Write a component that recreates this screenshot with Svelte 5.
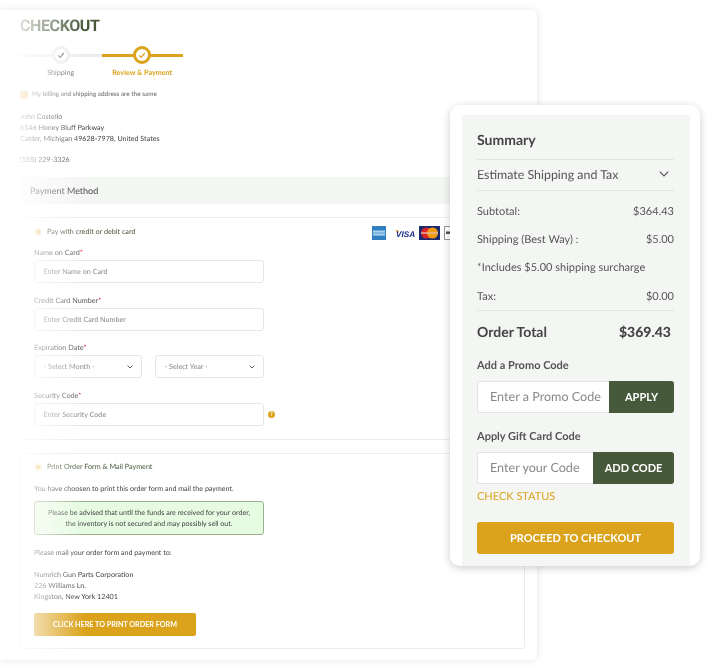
<script>
    const totals = [
        { label: "Subtotal:", value: "$364.43" },
        { label: "Shipping (Best Way) :", value: "$5.00" },
        { label: "*Includes $5.00 shipping surcharge", value: "" },
        { label: "Tax:", value: "$0.00" }
    ];
    const address = ["John Costello", "6146 Honey Bluff Parkway", "Calder, Michigan 49628-7978, United States"];
    const mailTo = ["Numrich Gun Parts Corporation", "226 Williams Ln.", "Kingston, New York 12401"];
</script>

<div class="page">
    <main class="card">
        <h1>CHECKOUT</h1>

        <div class="stepper">
            <div class="step">
                <span class="mark">
                    <svg viewBox="0 0 10 10" width="8" height="8"><path d="M1.5 5.5 4 8 8.5 2.5" fill="none" stroke="#777" stroke-width="1.6"/></svg>
                </span>
                <span class="name">Shipping</span>
            </div>
            <div class="step active">
                <span class="mark">
                    <svg viewBox="0 0 10 10" width="8" height="8"><path d="M1.5 5.5 4 8 8.5 2.5" fill="none" stroke="#dba21b" stroke-width="1.6"/></svg>
                </span>
                <span class="name">Review &amp; Payment</span>
            </div>
        </div>

        <div class="same">
            <span class="box"></span>
            <span>My billing and shipping address are the same</span>
        </div>

        <div class="address">
            {#each address as line}<div>{line}</div>{/each}
            <div class="phone">(555) 229-3326</div>
        </div>

        <div class="method">Payment Method</div>

        <section class="pay first">
            <div class="pay-head">
                <div class="radio-row"><span class="radio"></span>Pay with credit or debit card</div>
                <div class="logos">
                    <svg class="amex" width="14" height="14" viewBox="0 0 14 14"><rect width="14" height="14" fill="#2f7fc1"/><rect x="1" y="4.5" width="12" height="2.2" fill="#a9d3ee"/><rect x="1" y="7.4" width="12" height="2.2" fill="#a9d3ee"/></svg>
                    <svg width="20" height="10" viewBox="0 0 20 10"><path d="M0 2h3l1 3z" fill="#e8a33a"/><text x="1" y="8.5" class="visa">VISA</text></svg>
                    <svg width="21" height="14" viewBox="0 0 21 14"><rect width="21" height="14" fill="#1a2a6c"/><circle cx="7.5" cy="7" r="5.5" fill="#d8232a"/><circle cx="13.5" cy="7" r="5.5" fill="#f39c12"/><rect x="2" y="6" width="17" height="2" fill="#e9b9a0" opacity=".7"/></svg>
                    <svg width="14" height="14" viewBox="0 0 14 14"><rect x=".5" y=".5" width="13" height="13" fill="#fff" stroke="#999"/><rect x="2" y="5.5" width="9" height="2.5" fill="#555"/></svg>
                </div>
            </div>

            <div class="field">
                <span class="label">Name on Card<i>*</i></span>
                <div class="input">Enter Name on Card</div>
            </div>
            <div class="field">
                <span class="label">Credit Card Number<i>*</i></span>
                <div class="input">Enter Credit Card Number</div>
            </div>
            <div class="field">
                <span class="label">Expiration Date<i>*</i></span>
                <div class="selects">
                    <div class="input select">- Select Month -
                        <svg width="6" height="4" viewBox="0 0 6 4"><path d="M.5.5 3 3 5.5.5" fill="none" stroke="#666"/></svg>
                    </div>
                    <div class="input select year">- Select Year -
                        <svg width="6" height="4" viewBox="0 0 6 4"><path d="M.5.5 3 3 5.5.5" fill="none" stroke="#666"/></svg>
                    </div>
                </div>
            </div>
            <div class="field">
                <span class="label">Security Code<i>*</i></span>
                <div class="security">
                    <div class="input">Enter Security Code</div>
                    <span class="help">?</span>
                </div>
            </div>
        </section>

        <section class="pay second">
            <div class="radio-row"><span class="radio"></span>Print Order Form &amp; Mail Payment</div>
            <p class="chosen">You have choosen to print this order form and mail the payment.</p>
            <div class="notice">Please be advised that until the funds are received for your order,<br>the inventory is not secured and may possibly sell out.</div>
            <p class="mail">Please mail your order form and payment to:</p>
            <div class="mail-address">
                {#each mailTo as line}<div>{line}</div>{/each}
            </div>
            <button class="print">CLICK HERE TO PRINT ORDER FORM</button>
        </section>

        <div class="fade"></div>
    </main>

    <aside class="summary">
        <div class="panel">
            <h2>Summary</h2>
            <div class="estimate">
                <span>Estimate Shipping and Tax</span>
                <svg width="10" height="6" viewBox="0 0 10 6"><path d="M.7.7 5 5 9.3.7" fill="none" stroke="#555" stroke-width="1.1"/></svg>
            </div>
            <div class="rows">
                {#each totals as row}
                    <div class="row"><span>{row.label}</span><span>{row.value}</span></div>
                {/each}
            </div>
            <div class="total"><span>Order Total</span><b>$369.43</b></div>

            <div class="code-title">Add a Promo Code</div>
            <div class="code">
                <div class="code-input">Enter a Promo Code</div>
                <button>APPLY</button>
            </div>

            <div class="code-title gift">Apply Gift Card Code</div>
            <div class="code">
                <div class="code-input">Enter your Code</div>
                <button class="wide">ADD CODE</button>
            </div>
            <div class="status">CHECK STATUS</div>
            <button class="proceed">PROCEED TO CHECKOUT</button>
        </div>
    </aside>
</div>

<style>
    :global(body) {
        margin: 0;
        background: #fff;
    }
    .page {
        position: relative;
        width: 710px;
        height: 670px;
        overflow: hidden;
        font-family: Lato, "Liberation Sans", sans-serif;
        color: #444;
        text-rendering: geometricPrecision;
    }
    .card {
        position: relative;
        width: 537px;
        height: 650px;
        margin: 10px 0 0 0;
        padding: 0 12px 0 20px;
        box-sizing: border-box;
        background: #fff;
        border-radius: 0 6px 6px 0;
        box-shadow: 0 0 8px rgba(0, 0, 0, 0.1);
        filter: blur(0.35px);
    }
    h1 {
        margin: 0;
        padding-top: 8px;
        font: 700 16px/16px Roboto, sans-serif;
        letter-spacing: -0.4px;
        color: #47583a;
    }
    .stepper {
        display: flex;
        margin-top: 12px;
        width: 163px;
    }
    .step {
        position: relative;
        flex: 1;
        display: flex;
        flex-direction: column;
        align-items: center;
    }
    .step::before {
        content: "";
        position: absolute;
        left: 0;
        right: 0;
        top: 8px;
        height: 3px;
        background: #ececec;
    }
    .step.active::before {
        background: #dba21b;
    }
    .mark {
        position: relative;
        box-sizing: border-box;
        width: 18px;
        height: 18px;
        border: 3px solid #ececec;
        border-radius: 50%;
        background: #fff;
        display: flex;
        align-items: center;
        justify-content: center;
    }
    .active .mark {
        border-color: #dba21b;
    }
    .name {
        margin-top: 4px;
        font-size: 7.2px;
        line-height: 10px;
        color: #666;
    }
    .active .name {
        color: #dba21b;
        font-weight: 700;
    }
    .same {
        display: flex;
        align-items: center;
        gap: 4px;
        margin-top: 12px;
        font-size: 6.4px;
        line-height: 9px;
        color: #666;
    }
    .box {
        width: 8px;
        height: 8px;
        border-radius: 2px;
        background: #ecc665;
    }
    .address {
        margin-top: 12px;
        font-size: 7.15px;
        line-height: 11px;
        color: #444;
    }
    .phone {
        margin-top: 10px;
    }
    .method {
        margin-top: 12px;
        height: 27px;
        padding-left: 10px;
        background: #f4f6f4;
        font-size: 9px;
        line-height: 27px;
        color: #444;
    }
    .pay {
        border: 1px solid #ececec;
        box-sizing: border-box;
        padding: 0 13px;
    }
    .first {
        margin-top: 13px;
        height: 223px;
        padding-top: 8px;
        border-right: none;
        border-left-color: #f4f4f4;
    }
    .second {
        margin-top: 13px;
        height: 196px;
        padding-top: 8px;
        border-radius: 3px;
    }
    .pay-head {
        display: flex;
        justify-content: space-between;
        align-items: center;
        height: 12px;
    }
    .radio-row {
        display: flex;
        align-items: center;
        gap: 5px;
        font-size: 7.2px;
        line-height: 10px;
        color: #47583a;
    }
    .radio {
        width: 4px;
        height: 4px;
        border-radius: 50%;
        background: #ecc665;
        box-shadow: 0 0 0 2px #f9ecc8;
        margin: 0 2px 0 2px;
    }
    .logos {
        display: flex;
        align-items: center;
        gap: 4px;
        margin: 1px 54px 0 0;
    }
    .amex {
        margin-right: 5px;
    }
    .visa {
        font: italic 700 8.2px "Liberation Sans", sans-serif;
        fill: #1a2a8c;
    }
    .field {
        display: flex;
        flex-direction: column;
        margin-top: 10px;
    }
    .field + .field {
        margin-top: 12.67px;
    }
    .label {
        font-size: 7.25px;
        line-height: 10px;
        color: #555;
        margin-bottom: 2px;
    }
    .label i {
        color: #d9333a;
        font-style: normal;
    }
    .input {
        box-sizing: border-box;
        width: 230px;
        height: 23px;
        padding-left: 8.5px;
        border: 1px solid #e6e6e6;
        border-radius: 3px;
        font-size: 7.2px;
        line-height: 21px;
        color: #888;
    }
    .selects {
        display: flex;
        gap: 13px;
        width: 230px;
    }
    .select {
        width: 108px;
        display: flex;
        justify-content: space-between;
        align-items: center;
        padding-right: 8px;
    }
    .select.year {
        width: 109px;
    }
    .security {
        display: flex;
        align-items: center;
        gap: 4px;
    }
    .help {
        width: 7px;
        height: 7px;
        border-radius: 50%;
        background: #dba21b;
        color: #fff;
        font-size: 6px;
        font-weight: 700;
        line-height: 7px;
        text-align: center;
    }
    p {
        margin: 0;
        font-size: 7.1px;
        line-height: 11px;
        color: #444;
    }
    .chosen {
        margin-top: 11px;
    }
    .notice {
        box-sizing: border-box;
        margin-top: 7px;
        width: 230px;
        height: 34px;
        border: 1px solid #9bb18d;
        border-radius: 3px;
        background: #e6fbe1;
        font-size: 7.1px;
        line-height: 11px;
        color: #444;
        text-align: center;
        padding-top: 5px;
    }
    .mail {
        margin-top: 12px;
    }
    .mail-address {
        margin-top: 11px;
        font-size: 7.15px;
        line-height: 11px;
    }
    .print {
        display: block;
        margin-top: 11px;
        width: 162px;
        height: 23px;
        padding: 0;
        border: 0;
        border-radius: 2px;
        background: #dba21b;
        color: #fff;
        font: 700 7.2px Lato, sans-serif;
    }
    .fade {
        position: absolute;
        left: 0;
        top: 0;
        bottom: 0;
        width: 85px;
        background: linear-gradient(90deg, #fff 12px, rgba(255, 255, 255, 0.82) 20px, rgba(255, 255, 255, 0));
        pointer-events: none;
    }
    .summary {
        position: absolute;
        left: 450px;
        top: 105px;
        width: 250px;
        height: 461px;
        box-sizing: border-box;
        padding: 10px 10px 0 12px;
        background: #fff;
        border-radius: 10px;
        box-shadow: 0 2px 8px rgba(0, 0, 0, 0.2);
    }
    .panel {
        box-sizing: border-box;
        height: 451px;
        padding: 0 16px 0 15px;
        background: #f4f6f4;
        color: #555;
        filter: blur(0.25px);
    }
    h2 {
        margin: 0;
        height: 44px;
        font-size: 14px;
        font-weight: 700;
        line-height: 50px;
        color: #444;
        border-bottom: 1px solid #e2e4e2;
    }
    .estimate {
        display: flex;
        justify-content: space-between;
        align-items: center;
        height: 31px;
        padding: 0 5px 2px 0;
        box-sizing: border-box;
        font-size: 12.4px;
        border-bottom: 1px solid #e2e4e2;
    }
    .rows {
        padding-top: 6px;
    }
    .row {
        display: flex;
        justify-content: space-between;
        height: 28.2px;
        font-size: 11px;
        line-height: 29px;
        color: #555;
    }
    .total {
        display: flex;
        justify-content: space-between;
        align-items: center;
        box-sizing: border-box;
        height: 44px;
        padding: 0 3px 2px 0;
        border-top: 1px solid #e2e4e2;
        font-size: 14px;
        font-weight: 700;
        color: #444;
    }
    .code-title {
        margin-top: 5px;
        font-size: 11px;
        font-weight: 700;
        line-height: 14px;
    }
    .gift {
        margin-top: 17px;
    }
    .code {
        display: flex;
        height: 32px;
        margin-top: 8px;
    }
    .code-input {
        flex: 1;
        box-sizing: border-box;
        padding-left: 12px;
        background: #fff;
        border: 1px solid #e4e4e4;
        border-right: 0;
        border-radius: 3px 0 0 3px;
        font-size: 12.6px;
        line-height: 30px;
        color: #888;
        white-space: nowrap;
    }
    .code button {
        padding: 0;
        border: 0;
        border-radius: 0 3px 3px 0;
        background: #46593a;
        color: #fff;
        font: 700 11px Lato, sans-serif;
        width: 65px;
    }
    .code button.wide {
        width: 81px;
    }
    .status {
        margin-top: 6px;
        font-size: 11px;
        font-weight: 400;
        line-height: 14px;
        color: #dba21b;
    }
    .proceed {
        display: block;
        margin-top: 18px;
        width: 100%;
        height: 32px;
        border: 0;
        border-radius: 3px;
        background: #dba21b;
        color: #fff;
        font: 700 11px Lato, sans-serif;
    }
</style>
